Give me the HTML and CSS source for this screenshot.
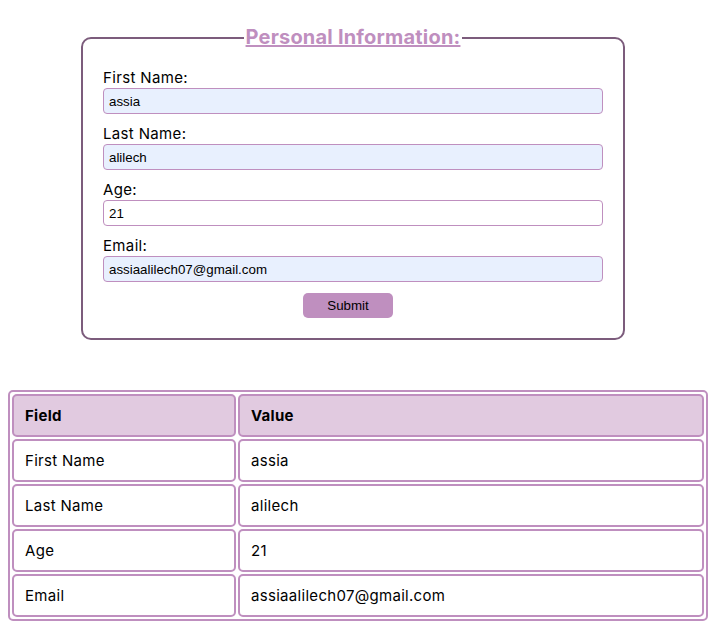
FILE: index.html
```html
<!DOCTYPE html>
<html>
<head>
<meta charset="utf-8">
<link rel="stylesheet" href="styles.css">
</head>
<body>
<fieldset class="info">
  <legend class="info-title">Personal Information:</legend>
  <form class="info-form">
    <div class="field">
      <label class="field-label">First Name:</label>
      <input class="field-input autofill" type="text" value="assia">
    </div>
    <div class="field">
      <label class="field-label">Last Name:</label>
      <input class="field-input autofill" type="text" value="alilech">
    </div>
    <div class="field">
      <label class="field-label">Age:</label>
      <input class="field-input" type="text" value="21">
    </div>
    <div class="field">
      <label class="field-label">Email:</label>
      <input class="field-input autofill" type="text" value="assiaalilech07@gmail.com">
    </div>
    <div class="actions">
      <button class="submit" type="button">Submit</button>
    </div>
  </form>
</fieldset>

<table class="data">
  <thead>
    <tr><th class="col-field">Field</th><th>Value</th></tr>
  </thead>
  <tbody>
    <tr><td>First Name</td><td>assia</td></tr>
    <tr><td>Last Name</td><td>alilech</td></tr>
    <tr><td>Age</td><td>21</td></tr>
    <tr><td>Email</td><td>assiaalilech07@gmail.com</td></tr>
  </tbody>
</table>
</body>
</html>
```
FILE: styles.css
```css
body {
  margin: 8px;
  font-family: Inter, "Open Sans", sans-serif;
  color: #000;
  background: #fff;
}

.info {
  box-sizing: border-box;
  width: 544px;
  margin: 18px 0 0 73px;
  padding: 0 20px 20px 20px;
  border: 2px solid #7c5c7c;
  border-radius: 10px;
}

.info-title {
  margin: 0 auto;
  padding: 0 2px;
  font-size: 20px;
  font-weight: 700;
  line-height: 23px;
  letter-spacing: 0.2px;
  color: #bf8fbf;
  text-decoration: underline;
}

.info-form {
  display: flex;
  flex-direction: column;
  gap: 11px;
  padding-top: 20px;
}

.field {
  display: flex;
  flex-direction: column;
  gap: 1px;
}

.field-label {
  font-size: 15px;
  line-height: 18px;
  letter-spacing: 0.35px;
}

.field-input {
  box-sizing: border-box;
  width: 500px;
  height: 26px;
  margin: 0;
  padding: 0 5px;
  border: 1px solid #bf8fbf;
  border-radius: 4px;
  background: #fff;
  font-family: "Liberation Sans", Arial, sans-serif;
  font-size: 13.333px;
  color: #000;
  outline: none;
}

.field-input.autofill {
  background: #e8f0fe;
}

.actions {
  display: flex;
  justify-content: center;
  padding-right: 10px;
}

.submit {
  width: 90px;
  height: 25px;
  border: none;
  border-radius: 5px;
  background: #bf8fbf;
  font-family: "Liberation Sans", Arial, sans-serif;
  font-size: 13.333px;
  color: #000;
}

.data {
  width: 700px;
  margin-top: 50px;
  border: 2px solid #bf8fbf;
  border-radius: 5px;
  border-spacing: 2px;
  font-size: 15px;
  letter-spacing: 0.3px;
}

.data th,
.data td {
  padding: 11px 11px;
  line-height: 17px;
  border: 2px solid #bf8fbf;
  border-radius: 5px;
  text-align: left;
}

.data th {
  background: #e1cae0;
  font-weight: 700;
}

.col-field {
  width: 198px;
}
```
